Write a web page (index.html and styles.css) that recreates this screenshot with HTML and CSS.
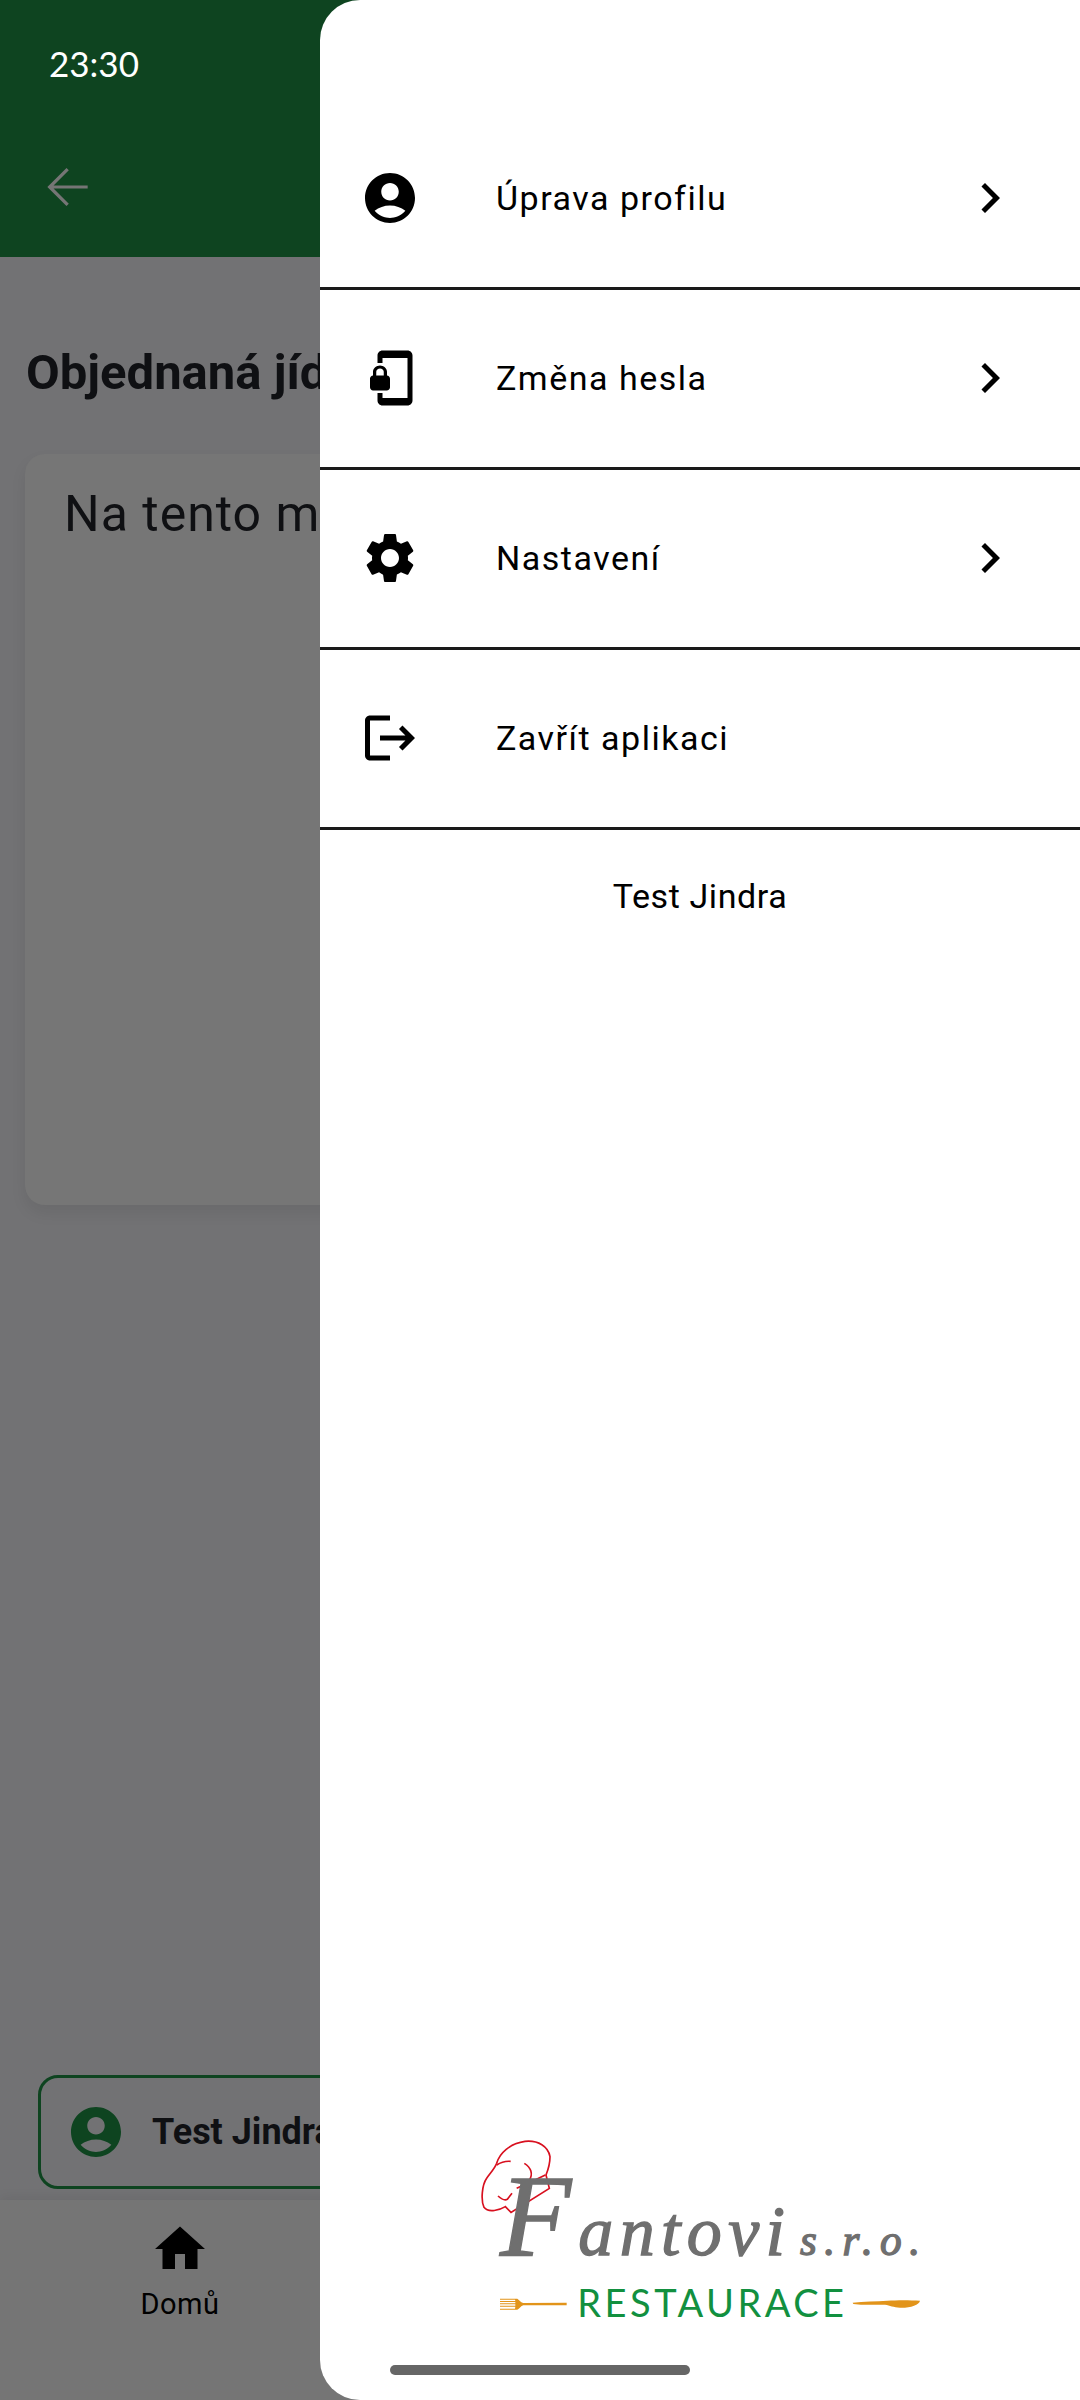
FILE: index.html
```html
<!DOCTYPE html>
<html lang="cs">
<head>
  <meta charset="UTF-8" />
  <meta name="viewport" content="width=device-width, initial-scale=1.0" />
  <title>Fantovi</title>
  <link rel="stylesheet" href="styles.css">
</head>
<body>
  <div class="screen">

    <!-- page behind the drawer -->
    <div class="page">
      <header class="appbar">
        <div class="status-time">23:30</div>
        <svg class="back-icon" viewBox="0 0 24 24"><path d="M20 11.4H6.8l5.9-5.9-.9-.9L4.4 12l7.4 7.4.9-.9-5.9-5.9H20z"/></svg>
      </header>

      <main class="content">
        <h1 class="title">Objednaná jídla</h1>
        <div class="card">Na tento měsíc</div>
        <div class="user-chip">
          <svg class="chip-icon" viewBox="0 0 24 24"><path d="M12 2C6.48 2 2 6.48 2 12s4.48 10 10 10 10-4.48 10-10S17.52 2 12 2zm0 4c1.93 0 3.5 1.57 3.5 3.5S13.93 13 12 13s-3.5-1.57-3.5-3.5S10.07 6 12 6zm0 14c-2.03 0-4.43-.82-6.14-2.88C7.55 15.8 9.68 15 12 15s4.45.8 6.14 2.12C16.43 19.18 14.03 20 12 20z"/></svg>
          <span>Test Jindra</span>
        </div>
      </main>

      <nav class="bottom-nav">
        <div class="nav-item">
          <svg class="nav-icon" viewBox="0 0 24 24"><path d="M10 20v-6h4v6h5v-8h3L12 3 2 12h3v8z"/></svg>
          <span>Domů</span>
        </div>
      </nav>
    </div>

    <!-- drawer -->
    <aside class="drawer">
      <ul class="menu">
        <li class="menu-row">
          <svg class="menu-icon" viewBox="0 0 24 24"><path d="M12 2C6.48 2 2 6.48 2 12s4.48 10 10 10 10-4.48 10-10S17.52 2 12 2zm0 4c1.93 0 3.5 1.57 3.5 3.5S13.93 13 12 13s-3.5-1.57-3.5-3.5S10.07 6 12 6zm0 14c-2.03 0-4.43-.82-6.14-2.88C7.55 15.8 9.68 15 12 15s4.45.8 6.14 2.12C16.43 19.18 14.03 20 12 20z"/></svg>
          <span class="menu-label">Úprava profilu</span>
          <svg class="menu-icon" viewBox="0 0 24 24"><path d="M10 6L8.59 7.41 13.17 12l-4.58 4.59L10 18l6-6z"/></svg>
        </li>
        <li class="menu-row">
          <svg class="menu-icon" viewBox="0 0 24 24"><path d="M19 1H9c-1.1 0-2 .9-2 2v3h2V4h10v16H9v-2H7v3c0 1.1.9 2 2 2h10c1.1 0 2-.9 2-2V3c0-1.1-.9-2-2-2zm-8.2 10V9.5C10.8 8.1 9.4 7 8 7S5.2 8.1 5.2 9.5V11c-.6 0-1.2.6-1.2 1.2v3.5c0 .7.6 1.3 1.2 1.3h5.5c.7 0 1.3-.6 1.3-1.2v-3.5c0-.7-.6-1.3-1.2-1.3zm-1.3 0h-3V9.5c0-.8.7-1.3 1.5-1.3s1.5.5 1.5 1.3V11z"/></svg>
          <span class="menu-label">Změna hesla</span>
          <svg class="menu-icon" viewBox="0 0 24 24"><path d="M10 6L8.59 7.41 13.17 12l-4.58 4.59L10 18l6-6z"/></svg>
        </li>
        <li class="menu-row">
          <svg class="menu-icon" viewBox="0 0 24 24"><path d="M19.14 12.94c.04-.3.06-.61.06-.94 0-.32-.02-.64-.07-.94l2.03-1.58c.18-.14.23-.41.12-.61l-1.92-3.32c-.12-.22-.37-.29-.59-.22l-2.39.96c-.5-.38-1.03-.7-1.62-.94l-.36-2.54c-.04-.24-.24-.41-.48-.41h-3.84c-.24 0-.43.17-.47.41l-.36 2.54c-.59.24-1.13.57-1.62.94l-2.39-.96c-.22-.08-.47 0-.59.22L2.74 8.87c-.12.21-.08.47.12.61l2.03 1.58c-.05.3-.09.63-.09.94s.02.64.07.94l-2.03 1.58c-.18.14-.23.41-.12.61l1.92 3.32c.12.22.37.29.59.22l2.39-.96c.5.38 1.03.7 1.62.94l.36 2.54c.05.24.24.41.48.41h3.84c.24 0 .44-.17.47-.41l.36-2.54c.59-.24 1.13-.56 1.62-.94l2.39.96c.22.08.47 0 .59-.22l1.92-3.32c.12-.22.07-.47-.12-.61l-2.01-1.58zM12 15.6c-1.98 0-3.6-1.62-3.6-3.6s1.62-3.6 3.6-3.6 3.6 1.62 3.6 3.6-1.62 3.6-3.6 3.6z"/></svg>
          <span class="menu-label">Nastavení</span>
          <svg class="menu-icon" viewBox="0 0 24 24"><path d="M10 6L8.59 7.41 13.17 12l-4.58 4.59L10 18l6-6z"/></svg>
        </li>
        <li class="menu-row">
          <svg class="menu-icon" viewBox="0 0 24 24"><path d="M17 7l-1.41 1.41L18.17 11H8v2h10.17l-2.58 2.58L17 17l5-5zM4 5h8V3H4c-1.1 0-2 .9-2 2v14c0 1.1.9 2 2 2h8v-2H4V5z"/></svg>
          <span class="menu-label">Zavřít aplikaci</span>
        </li>
      </ul>

      <div class="user-name">Test Jindra</div>

      <!-- logo, coordinates are 3x page pixels -->
      <svg class="logo" viewBox="0 0 1440 690">
        <g class="logo-hat">
          <path d="M153 307L136 290C120 300 85 310 72 292C62 270 66 225 80 205C90 190 105 175 110 160C118 130 150 100 195 94C235 90 265 110 270 140C270 165 262 185 258 195L268 235L153 307z"/>
          <path d="M110 165C122 157 138 153 152 154"/>
          <path d="M193 160C212 172 222 192 206 214"/>
          <path d="M170 235C200 222 230 208 256 195"/>
          <path d="M114 258C125 268 135 272 142 268L156 250"/>
        </g>
        <text class="logo-script" y="435" x="120"><tspan class="logo-initial">F</tspan></text>
        <text class="logo-script" y="435" x="355" textLength="620" lengthAdjust="spacing">antovi</text>
        <text class="logo-script logo-small" y="435" x="1020" textLength="360" lengthAdjust="spacing">s.r.o.</text>
        <text class="logo-word" y="622" x="352" textLength="800" lengthAdjust="spacing">RESTAURACE</text>
        <g class="logo-cutlery">
          <path d="M172 566C180 572 183 578 190 579L320 578V586L190 586C182 588 180 596 172 599H120V596H165L166 590H120V587H166V583H120V580H166V576H120V573H166L165 569H120V566z"/>
          <path d="M1178 578C1210 574 1250 574 1282 572C1310 570 1350 570 1380 572C1378 585 1350 594 1320 593C1300 592 1290 586 1275 584C1240 584 1210 586 1180 582z"/>
        </g>
      </svg>
    </aside>

    <div class="home-bar"></div>
  </div>
</body>
</html>
```

FILE: styles.css
```css
* {
  box-sizing: border-box;
}

body {
  margin: 0;
  font-family: 'Roboto', sans-serif;
  color: #000000;
}

.screen {
  position: relative;
  width: 1080px;
  height: 2400px;
  overflow: hidden;
}

/* page behind the drawer */
.page {
  display: flex;
  flex-direction: column;
  height: 100%;
  background: #727274;
}

.appbar {
  height: 257px;
  padding: 43px 0 0 36px;
  background: #0e4420;
}

.status-time {
  padding-left: 13px;
  font-family: 'Lato', sans-serif;
  font-size: 35px;
  line-height: 40px;
  color: #ffffff;
}

.back-icon {
  display: block;
  width: 62px;
  height: 62px;
  margin-top: 73px;
  fill: #757575;
}

.content {
  flex: 1;
  display: flex;
  flex-direction: column;
  padding: 0 25px 11px;
}

.title {
  margin: 81px 0 0 1px;
  font-size: 49px;
  line-height: 70px;
  font-weight: 700;
  white-space: nowrap;
  color: #0f1013;
}

.card {
  height: 751px;
  margin-top: 46px;
  padding: 30px 39px;
  border-radius: 20px;
  background: #767676;
  box-shadow: 0 8px 16px rgba(0, 0, 0, 0.07);
  font-size: 50px;
  line-height: 60px;
  letter-spacing: 1px;
  white-space: nowrap;
  color: #0f1013;
}

.user-chip {
  display: flex;
  align-items: center;
  gap: 26px;
  height: 114px;
  margin: auto 13px 0;
  padding-left: 25px;
  border: 3px solid #0e4420;
  border-radius: 20px;
  font-size: 36px;
  font-weight: 700;
  color: #0f1013;
}

.chip-icon {
  width: 60px;
  height: 60px;
  fill: #0e4420;
}

.bottom-nav {
  display: flex;
  height: 200px;
  background: #757575;
  box-shadow: 0 -4px 10px rgba(0, 0, 0, 0.05);
}

.nav-item {
  display: flex;
  flex-direction: column;
  align-items: center;
  width: 360px;
  padding-top: 19px;
  font-size: 29px;
  line-height: 34px;
  letter-spacing: 0.5px;
}

.nav-icon {
  width: 60px;
  height: 60px;
  margin-bottom: 8px;
}

/* drawer */
.drawer {
  position: absolute;
  top: 0;
  right: 0;
  bottom: 0;
  left: 320px;
  display: flex;
  flex-direction: column;
  padding-top: 110px;
  border-radius: 40px 0 0 40px;
  background: #ffffff;
}

.menu {
  margin: 0;
  padding: 0;
  list-style: none;
}

.menu-row {
  display: flex;
  align-items: center;
  height: 180px;
  padding: 0 60px 2px 40px;
  border-bottom: 3px solid #1a1a1a;
}

.menu-icon {
  flex: none;
  width: 60px;
  height: 60px;
}

.menu-label {
  flex: 1;
  padding-left: 76px;
  font-size: 34px;
  letter-spacing: 1.5px;
}

.user-name {
  margin-top: 46px;
  font-size: 34px;
  line-height: 40px;
  letter-spacing: 0.6px;
  text-align: center;
}

.logo {
  display: block;
  width: 480px;
  height: 230px;
  margin: auto 0 60px 140px;
}

.logo-hat path {
  fill: none;
  stroke: #d8101f;
  stroke-width: 5;
}

.logo-script {
  font-family: 'Liberation Serif', serif;
  font-style: italic;
  font-size: 210px;
  fill: #6f6f6f;
  stroke: #6f6f6f;
  stroke-width: 4;
}

.logo-initial {
  font-size: 350px;
}

.logo-small {
  font-size: 130px;
}

.logo-word {
  font-family: 'Lato', sans-serif;
  font-size: 114px;
  fill: #12903f;
}

.logo-cutlery path {
  fill: #e2941a;
}

.home-bar {
  position: absolute;
  left: 390px;
  bottom: 25px;
  width: 300px;
  height: 10px;
  border-radius: 5px;
  background: #666666;
}
```
